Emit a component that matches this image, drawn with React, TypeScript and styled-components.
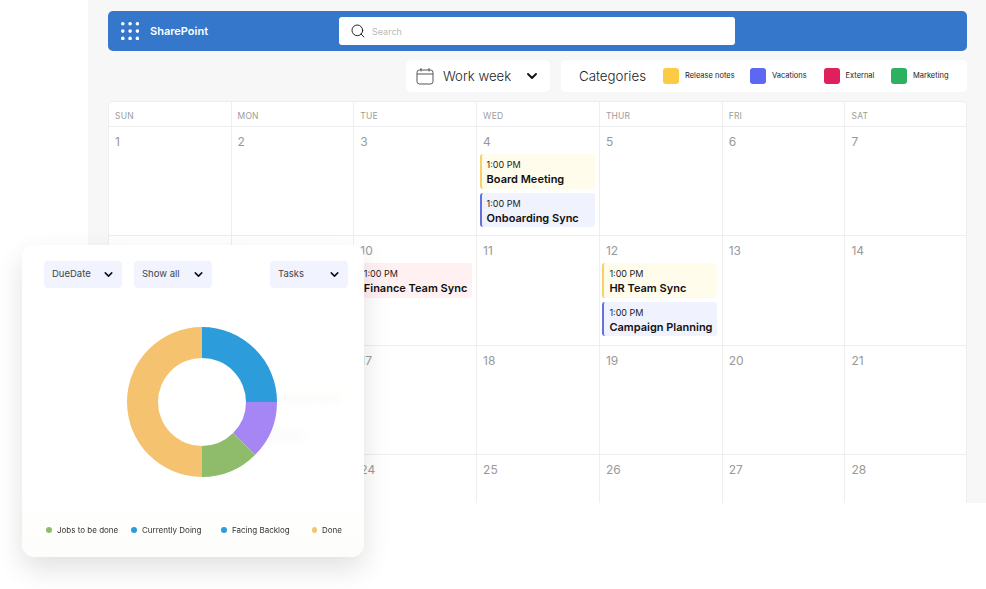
import React from "react";
import styled, { createGlobalStyle } from "styled-components";
import { ChevronDown, Search as SearchIcon } from "lucide-react";

const Global = createGlobalStyle`
  html, body { margin: 0; padding: 0; background: #fff; }
  body { font-family: Inter, "Liberation Sans", sans-serif; }
  * { box-sizing: border-box; }
`;

const Page = styled.div`
  position: relative;
  width: 986px;
  height: 589px;
  overflow: hidden;
  background: #fff;
  padding-left: 88px;
`;
const Backdrop = styled.main`
  height: 503px;
  background: #f7f7f7;
  padding: 11px 19px 0 20px;
  display: flex;
  flex-direction: column;
  overflow: hidden;
`;
const TopBar = styled.header`
  height: 40px;
  flex: none;
  background: #3477cb;
  border-radius: 5px;
  display: flex;
  align-items: center;
  padding-left: 13px;
`;
const Brand = styled.div`
  width: 218px;
  display: flex;
  align-items: center;
  gap: 11px;
  color: #fff;
  font-size: 11px;
  font-weight: 600;
`;
const SearchBox = styled.div`
  width: 396px;
  height: 28px;
  background: #fff;
  border-radius: 3px;
  display: flex;
  align-items: center;
  gap: 6px;
  padding-left: 11px;
  color: #222;
  font-size: 9px;
  span { color: #b9b9b9; }
`;
const Toolbar = styled.div`
  height: 32px;
  flex: none;
  margin-top: 9px;
  display: flex;
  justify-content: flex-end;
  gap: 11px;
`;
const ToolCard = styled.div`
  height: 32px;
  background: #fff;
  border-radius: 5px;
  display: flex;
  align-items: center;
`;
const ViewCard = styled(ToolCard)`
  width: 144px;
  padding-left: 10px;
  color: #222;
  font-size: 13.2px;
  font-weight: 300;
  gap: 9px;
  white-space: nowrap;
  svg:last-child { margin-left: 4px; }
`;
const CategoryCard = styled(ToolCard)`
  width: 406px;
  padding-left: 18px;
`;
const CategoryTitle = styled.span`
  width: 84px;
  color: #222;
  font-size: 13.3px;
  font-weight: 300;
`;
const Category = styled.div<{ $w: number }>`
  width: ${(p) => p.$w}px;
  display: flex;
  align-items: center;
  gap: 6px;
  font-size: 7.5px;
  color: #222;
  margin-top: -1px;
`;
const Swatch = styled.i<{ $c: string }>`
  width: 16px;
  height: 16px;
  border-radius: 3px;
  background: ${(p) => p.$c};
`;
const Calendar = styled.section`
  margin-top: 9px;
  flex: 1;
  background: #fff;
  border: 1px solid #eeeeee;
  border-bottom: none;
  border-radius: 5px 5px 0 0;
  display: grid;
  grid-template-columns: 121.5px repeat(5, 122.8px) 1fr;
  grid-template-rows: 25px 109px 109.5px 109.5px 110px;
  overflow: hidden;
`;
const DayHead = styled.div`
  border-left: 1px solid #eeeeee;
  border-bottom: 1px solid #eeeeee;
  padding: 7.5px 0 0 6px;
  font-size: 8.5px;
  letter-spacing: 0.2px;
  line-height: 12px;
  color: #9c9c9c;
  &:first-child { border-left: none; }
`;
const Cell = styled.div<{ $first: boolean }>`
  border-left: ${(p) => (p.$first ? "none" : "1px solid #eeeeee")};
  border-bottom: 1px solid #eeeeee;
  padding: 7px 0 0 2.5px;
`;
const DayNum = styled.div`
  font-size: 12px;
  line-height: 15px;
  color: #999;
  padding-left: 3.5px;
  height: 20px;
`;
const Event = styled.div<{ $bg: string; $bar: string }>`
  width: 115px;
  height: 34.5px;
  margin-bottom: 4px;
  background: ${(p) => p.$bg};
  border-left: 2px solid ${(p) => p.$bar};
  border-radius: 3px;
  padding: 4px 0 0 5px;
  color: #111;
  white-space: nowrap;
`;
const EventTime = styled.div`
  font-size: 9px;
  line-height: 13px;
  color: #222;
`;
const EventTitle = styled.div`
  font-size: 11px;
  line-height: 16px;
  font-weight: 600;
`;
const Widget = styled.aside`
  position: absolute;
  left: 22px;
  top: 245px;
  width: 342px;
  height: 312px;
  background: linear-gradient(rgba(255, 255, 255, 0.95) 80%, rgba(253, 253, 251, 0.98));
  backdrop-filter: blur(5px);
  border-radius: 13px;
  box-shadow: 0 12px 28px rgba(0, 0, 0, 0.12);
  padding: 16px 16px 0 22px;
  display: flex;
  flex-direction: column;
`;
const Filters = styled.div`
  display: flex;
  gap: 12px;
`;
const Filter = styled.div<{ $push?: boolean }>`
  width: 78px;
  height: 27px;
  background: #f1f3fe;
  border-radius: 4px;
  display: flex;
  align-items: center;
  justify-content: space-between;
  padding: 0 7px 2px 8px;
  font-size: 9.5px;
  color: #444;
  margin-left: ${(p) => (p.$push ? "46px" : "0")};
  svg { margin-top: 2px; }
`;
const Chart = styled.div`
  display: flex;
  justify-content: flex-start;
  margin: 39px 0 0 83px;
  line-height: 0;
`;
const Legend = styled.div`
  display: flex;
  margin: 48px 0 0 2px;
  font-size: 8px;
  color: #333;
`;
const LegendItem = styled.div<{ $w: number }>`
  width: ${(p) => p.$w}px;
  display: flex;
  align-items: center;
  gap: 5px;
  white-space: nowrap;
`;
const Dot = styled.i<{ $c: string }>`
  width: 6px;
  height: 6px;
  border-radius: 50%;
  background: ${(p) => p.$c};
`;

const slice = (a0: number, a1: number) => {
  const R = 75, r = 44, c = 75;
  const pt = (rad: number, a: number) => {
    const t = (a * Math.PI) / 180;
    return `${c + rad * Math.sin(t)} ${c - rad * Math.cos(t)}`;
  };
  const large = a1 - a0 > 180 ? 1 : 0;
  return `M${pt(R, a0)}A${R} ${R} 0 ${large} 1 ${pt(R, a1)}L${pt(r, a1)}A${r} ${r} 0 ${large} 0 ${pt(r, a0)}Z`;
};

type Ev = { title: string; kind: "y" | "b" | "r" };
const KIND = {
  y: { bg: "#fffcec", bar: "#f7cf6b" },
  b: { bg: "#f0f2fe", bar: "#6570de" },
  r: { bg: "#fff0f1", bar: "#f3a0ae" },
};
const EVENTS: Record<number, Ev[]> = {
  4: [{ title: "Board Meeting", kind: "y" }, { title: "Onboarding Sync", kind: "b" }],
  10: [{ title: "Finance Team Sync", kind: "r" }],
  12: [{ title: "HR Team Sync", kind: "y" }, { title: "Campaign Planning", kind: "b" }],
  16: [{ title: "Vendor Agreement", kind: "y" }, { title: "Compliance", kind: "r" }],
};
const DAYS = ["SUN", "MON", "TUE", "WED", "THUR", "FRI", "SAT"];
const CATEGORIES = [
  { name: "Release notes", c: "#fbcb45", w: 87 },
  { name: "Vacations", c: "#5d68f2", w: 73.5 },
  { name: "External", c: "#e0205c", w: 67.5 },
  { name: "Marketing", c: "#2bb160", w: 70 },
];
const LEGEND = [
  { name: "Jobs to be done", c: "#8fbc6b", w: 85 },
  { name: "Currently Doing", c: "#2d9cdb", w: 90 },
  { name: "Facing Backlog", c: "#2d9cdb", w: 91 },
  { name: "Done", c: "#f5c26f", w: 30 },
];
const DOTS = [0, 1, 2];

export default function App() {
  return (
    <Page>
      <Global />
      <Backdrop>
        <TopBar>
          <Brand>
            <svg width="18" height="18" viewBox="0 0 18 18" fill="#fff">
              {DOTS.map((r) =>
                DOTS.map((c) => <circle key={`${r}${c}`} cx={1.8 + c * 7.3} cy={1.8 + r * 7.3} r="1.8" />)
              )}
            </svg>
            SharePoint
          </Brand>
          <SearchBox>
            <SearchIcon size={16} strokeWidth={1.5} />
            <span>Search</span>
          </SearchBox>
        </TopBar>
        <Toolbar>
          <ViewCard>
            <svg width="18" height="18" viewBox="0 0 18 18" fill="none" stroke="#555" strokeWidth="1">
              <rect x="1" y="3" width="16" height="14" rx="2.5" />
              <path d="M1 7h16M5 1v3.5M13 1v3.5" />
            </svg>
            Work week
            <ChevronDown size={16} strokeWidth={2.8} color="#111" />
          </ViewCard>
          <CategoryCard>
            <CategoryTitle>Categories</CategoryTitle>
            {CATEGORIES.map((c) => (
              <Category key={c.name} $w={c.w}>
                <Swatch $c={c.c} />
                {c.name}
              </Category>
            ))}
          </CategoryCard>
        </Toolbar>
        <Calendar>
          {DAYS.map((d) => (
            <DayHead key={d}>{d}</DayHead>
          ))}
          {Array.from({ length: 28 }, (_, i) => i + 1).map((n) => (
            <Cell key={n} $first={n % 7 === 1}>
              <DayNum>{n}</DayNum>
              {(EVENTS[n] || []).map((e) => (
                <Event key={e.title} $bg={KIND[e.kind].bg} $bar={KIND[e.kind].bar}>
                  <EventTime>1:00 PM</EventTime>
                  <EventTitle>{e.title}</EventTitle>
                </Event>
              ))}
            </Cell>
          ))}
        </Calendar>
      </Backdrop>
      <Widget>
        <Filters>
          <Filter>DueDate<ChevronDown size={13} strokeWidth={2.8} color="#111" /></Filter>
          <Filter>Show all<ChevronDown size={13} strokeWidth={2.8} color="#111" /></Filter>
          <Filter $push>Tasks<ChevronDown size={13} strokeWidth={2.8} color="#111" /></Filter>
        </Filters>
        <Chart>
          <svg width="150" height="150" viewBox="0 0 150 150">
            <path d={slice(0, 90)} fill="#2d9cdb" />
            <path d={slice(90, 135)} fill="#a685f5" />
            <path d={slice(135, 180)} fill="#8fbc6b" />
            <path d={slice(180, 360)} fill="#f5c26f" />
          </svg>
        </Chart>
        <Legend>
          {LEGEND.map((l) => (
            <LegendItem key={l.name} $w={l.w}>
              <Dot $c={l.c} />
              {l.name}
            </LegendItem>
          ))}
        </Legend>
      </Widget>
    </Page>
  );
}
